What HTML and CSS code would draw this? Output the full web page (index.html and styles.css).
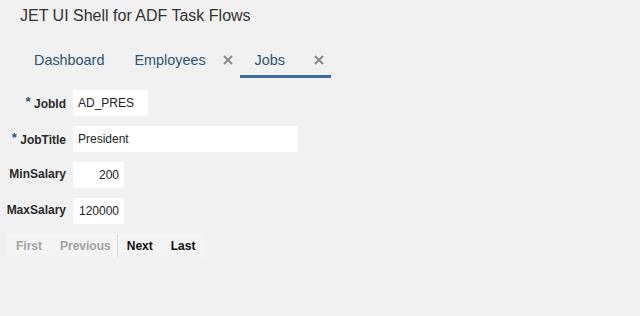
FILE: index.html
```html
<!DOCTYPE html>
<html lang="en">
  <head>
    <meta charset="UTF-8" />
    <meta name="viewport" content="width=device-width, initial-scale=1.0" />
    <title>JET UI Shell for ADF Task Flows</title>
    <link rel="stylesheet" href="styles.css">
  </head>
  <body>
    <h1 class="app-title">JET UI Shell for ADF Task Flows</h1>

    <ul class="tab-bar">
      <li class="tab">
        <span class="tab-label">Dashboard</span>
      </li>
      <li class="tab">
        <span class="tab-label">Employees</span>
        <span class="tab-close">
          <svg width="10" height="10" viewBox="0 0 10 10">
            <path d="M1 1 L9 9 M9 1 L1 9" />
          </svg>
        </span>
      </li>
      <li class="tab tab-short selected">
        <span class="tab-label">Jobs</span>
        <span class="tab-close">
          <svg width="10" height="10" viewBox="0 0 10 10">
            <path d="M1 1 L9 9 M9 1 L1 9" />
          </svg>
        </span>
      </li>
    </ul>

    <form class="job-form">
      <label for="jobId"><span class="required">*</span> JobId</label>
      <input type="text" id="jobId" class="field-short" value="AD_PRES" />

      <label for="jobTitle"><span class="required">*</span> JobTitle</label>
      <input type="text" id="jobTitle" class="field-long" value="President" />

      <label for="minSalary">MinSalary</label>
      <input type="text" id="minSalary" class="field-number" value="200" />

      <label for="maxSalary">MaxSalary</label>
      <input type="text" id="maxSalary" class="field-number" value="120000" />
    </form>

    <div class="pager">
      <span class="pager-item disabled">First</span>
      <span class="pager-item disabled">Previous</span>
      <span class="pager-sep"></span>
      <span class="pager-item">Next</span>
      <span class="pager-item">Last</span>
    </div>
  </body>
</html>
```

FILE: styles.css
```css
body {
  font-family: "Liberation Sans", Arial, sans-serif;
  background: #f1f1f1;
  margin: 0;
  padding: 0;
  color: #333;
}

.app-title {
  margin: 6px 0 0 20px;
  font-size: 16px;
  font-weight: normal;
  line-height: 20px;
  color: #333;
}

.tab-bar {
  list-style: none;
  display: flex;
  margin: 18px 0 0 19px;
  padding: 0;
}

.tab {
  display: flex;
  align-items: center;
  height: 31px;
  padding: 0 7px 0 15px;
  border-bottom: 3px solid transparent;
  font-size: 14.4px;
  color: #2e5375;
}

.tab:first-child {
  padding-right: 15px;
}

.tab.selected {
  border-bottom-color: #3a6d9c;
}

.tab-close {
  display: flex;
  margin-left: 17px;
}

.tab-short .tab-close {
  margin-left: 29px;
}

.tab-close path {
  stroke: #8a8a8a;
  stroke-width: 2;
}

.job-form {
  display: grid;
  grid-template-columns: 66px auto;
  grid-auto-rows: 26px;
  column-gap: 7px;
  row-gap: 10px;
  margin-top: 12px;
  justify-items: start;
  align-items: center;
}

.job-form label {
  justify-self: end;
  font-size: 12px;
  font-weight: bold;
  color: #2a2a2a;
  padding-bottom: 2px;
}

.required {
  color: #2e5375;
  font-size: 13px;
  vertical-align: 2px;
}

.job-form input {
  height: 26px;
  box-sizing: border-box;
  border: none;
  background: #fff;
  padding: 0 5px;
  font-family: "Liberation Sans", Arial, sans-serif;
  font-size: 12px;
  color: #222;
}

.field-short {
  width: 75px;
}

.field-long {
  width: 225px;
}

.field-number {
  width: 51px;
  text-align: right;
}

.pager {
  display: inline-flex;
  align-items: center;
  height: 25px;
  margin: 9px 0 0 7px;
  background: #f4f4f4;
  font-size: 12px;
  font-weight: bold;
}

.pager-item {
  padding: 0 9px;
  color: #111;
}

.pager-item.disabled {
  color: #a3a3a3;
}

.pager-item.disabled + .pager-sep {
  margin-left: -3px;
}

.pager-sep {
  width: 1px;
  height: 22px;
  background: #d8d8d8;
}
```
